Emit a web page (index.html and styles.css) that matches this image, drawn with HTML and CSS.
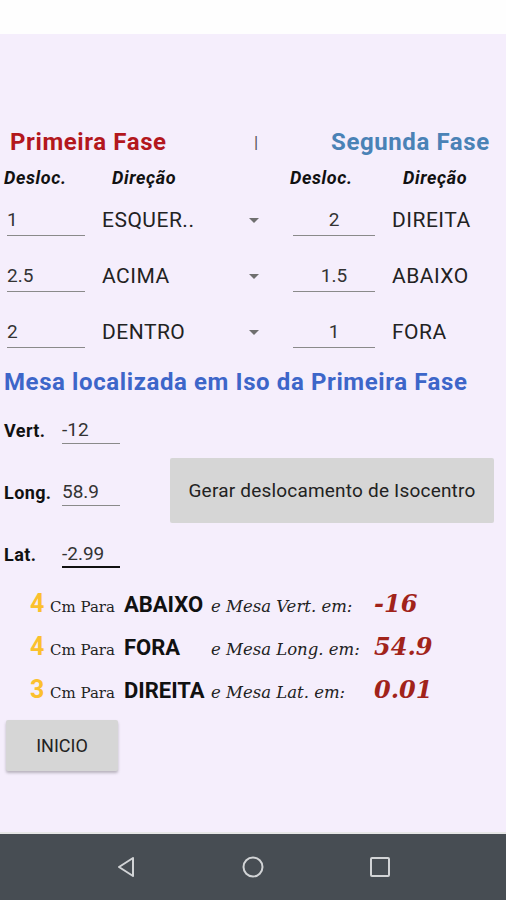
FILE: index.html
```html
<!DOCTYPE html>
<html>
<head>
    <title>Deslocamento de Isocentro</title>
    <link rel="stylesheet" href="styles.css">
</head>
<body>
    <div class="status-bar"></div>

    <div class="screen">
        <div class="phase-header">
            <span class="phase-first">Primeira Fase</span>
            <span class="phase-sep">|</span>
            <span class="phase-second">Segunda Fase</span>
        </div>

        <div class="col-header">
            <span class="h-desloc">Desloc.</span>
            <span class="h-direcao">Direção</span>
            <span class="h-desloc2">Desloc.</span>
            <span class="h-direcao2">Direção</span>
        </div>

        <div class="shift-row">
            <div class="field left-num">1</div>
            <div class="spinner"><span>ESQUER..</span><span class="arrow"></span></div>
            <div class="field right-num">2</div>
            <div class="dir-text">DIREITA</div>
        </div>
        <div class="shift-row">
            <div class="field left-num">2.5</div>
            <div class="spinner"><span>ACIMA</span><span class="arrow"></span></div>
            <div class="field right-num">1.5</div>
            <div class="dir-text">ABAIXO</div>
        </div>
        <div class="shift-row">
            <div class="field left-num">2</div>
            <div class="spinner"><span>DENTRO</span><span class="arrow"></span></div>
            <div class="field right-num">1</div>
            <div class="dir-text">FORA</div>
        </div>

        <h2 class="mesa-title">Mesa localizada em Iso da Primeira Fase</h2>

        <div class="mesa-area">
            <div class="mesa-fields">
                <div class="mesa-row">
                    <span class="mesa-label">Vert.</span>
                    <div class="field mesa-input">-12</div>
                </div>
                <div class="mesa-row">
                    <span class="mesa-label">Long.</span>
                    <div class="field mesa-input">58.9</div>
                </div>
                <div class="mesa-row last">
                    <span class="mesa-label">Lat.</span>
                    <div class="field mesa-input focused">-2.99</div>
                </div>
            </div>
            <button class="gray-button gerar">Gerar deslocamento de Isocentro</button>
        </div>

        <div class="results">
            <div class="result-row">
                <span class="r-num">4</span>
                <span class="r-cm">Cm Para</span>
                <span class="r-dir">ABAIXO</span>
                <span class="r-mesa">e Mesa Vert. em:</span>
                <span class="r-val">-16</span>
            </div>
            <div class="result-row">
                <span class="r-num">4</span>
                <span class="r-cm">Cm Para</span>
                <span class="r-dir">FORA</span>
                <span class="r-mesa">e Mesa Long. em:</span>
                <span class="r-val">54.9</span>
            </div>
            <div class="result-row">
                <span class="r-num">3</span>
                <span class="r-cm">Cm Para</span>
                <span class="r-dir">DIREITA</span>
                <span class="r-mesa">e Mesa Lat. em:</span>
                <span class="r-val">0.01</span>
            </div>
        </div>

        <button class="gray-button inicio">INICIO</button>
    </div>

    <div class="nav-bar">
        <svg width="24" height="24" viewBox="0 0 24 24"><path d="M19 3 L5 12 L19 21 Z" fill="none" stroke="#d2d4d6" stroke-width="2" stroke-linejoin="round"/></svg>
        <svg width="24" height="24" viewBox="0 0 24 24"><circle cx="12" cy="12" r="9.5" fill="none" stroke="#d2d4d6" stroke-width="2"/></svg>
        <svg width="24" height="24" viewBox="0 0 24 24"><rect x="3" y="3" width="18" height="18" rx="1" fill="none" stroke="#d2d4d6" stroke-width="2"/></svg>
    </div>
</body>
</html>
```

FILE: styles.css
```css
body {
    margin: 0;
    font-family: Roboto, "Liberation Sans", sans-serif;
    color: #222;
    background: #fff;
}

.status-bar {
    height: 34px;
    background: #fefefe;
}

.screen {
    height: 798px;
    background: #f5eefc;
    overflow: hidden;
}

/* phase header */
.phase-header {
    display: flex;
    align-items: center;
    height: 30px;
    margin-top: 93px;
    font-size: 24px;
    font-weight: bold;
    letter-spacing: 0.6px;
}

.phase-first {
    margin-left: 10px;
    width: 244px;
    color: #b3171d;
}

.phase-sep {
    width: 77px;
    font-size: 17px;
    font-weight: 400;
    color: #555;
}

.phase-second {
    color: #4a82b6;
}

.col-header {
    display: flex;
    align-items: center;
    height: 24px;
    margin: 8px 0 3px;
    font-size: 18px;
    font-weight: bold;
    font-style: italic;
    letter-spacing: 0.6px;
    color: #111;
}

.h-desloc { margin-left: 4px; width: 108px; }
.h-direcao { width: 178px; }
.h-desloc2 { width: 113px; }

/* shift rows */
.shift-row {
    display: flex;
    align-items: flex-start;
    height: 56px;
}

.field {
    box-sizing: border-box;
    height: 32px;
    margin-top: 12px;
    padding-top: 4px;
    font-size: 19px;
    color: #333;
    border-bottom: 1px solid #8a8a8a;
}

.left-num {
    margin-left: 7px;
    width: 78px;
}

.right-num {
    margin-left: 26px;
    width: 82px;
    text-align: center;
}

.spinner {
    display: flex;
    justify-content: space-between;
    align-items: center;
    margin-left: 17px;
    margin-top: 12px;
    width: 165px;
    height: 32px;
    font-size: 21px;
    letter-spacing: 0.5px;
    color: #222;
}

.arrow {
    width: 0;
    height: 0;
    margin-right: 8px;
    border-left: 5px solid transparent;
    border-right: 5px solid transparent;
    border-top: 5px solid #6f6f6f;
}

.dir-text {
    margin-left: 17px;
    margin-top: 12px;
    height: 32px;
    line-height: 32px;
    font-size: 21px;
    letter-spacing: 0.5px;
    color: #222;
}

/* mesa */
.mesa-title {
    margin: 0;
    padding-left: 4px;
    height: 44px;
    line-height: 44px;
    font-size: 24px;
    font-weight: bold;
    letter-spacing: 0.6px;
    color: #3d66c9;
}

.mesa-area {
    display: flex;
    align-items: flex-start;
}

.mesa-fields {
    width: 166px;
    padding-left: 4px;
}

.mesa-row {
    display: flex;
    align-items: flex-start;
    height: 62px;
}

.mesa-row.last {
    height: 50px;
}

.mesa-label {
    width: 58px;
    margin-top: 16px;
    font-size: 18px;
    font-weight: bold;
    letter-spacing: 0.4px;
    color: #111;
}

.mesa-input {
    width: 58px;
    height: 28px;
    padding-top: 2px;
    font-size: 19px;
}

.mesa-input.focused {
    border-bottom: 2px solid #111;
}

.gray-button {
    font-family: Roboto, "Liberation Sans", sans-serif;
    background: #d6d6d6;
    border: none;
    border-radius: 2px;
    color: #222;
}

.gerar {
    margin-top: 54px;
    width: 324px;
    height: 65px;
    font-size: 19px;
    letter-spacing: 0.2px;
}

/* results */
.results {
    margin-top: 4px;
}

.result-row {
    display: flex;
    align-items: baseline;
    height: 43px;
    line-height: 43px;
}

.r-num {
    margin-left: 30px;
    width: 20px;
    font-size: 25px;
    font-weight: bold;
    color: #fbc02d;
}

.r-cm {
    width: 74px;
    font-family: "DejaVu Serif", serif;
    font-size: 15px;
    color: #222;
}

.r-dir {
    width: 87px;
    font-size: 22px;
    font-weight: bold;
    color: #111;
}

.r-mesa {
    width: 163px;
    font-family: "DejaVu Serif", serif;
    font-style: italic;
    font-size: 16.5px;
    color: #222;
}

.r-val {
    font-family: "DejaVu Serif", serif;
    font-style: italic;
    font-weight: bold;
    font-size: 24px;
    color: #a1231a;
}

.inicio {
    display: block;
    margin: 9px 0 0 6px;
    width: 112px;
    height: 51px;
    font-size: 18px;
    box-shadow: 0 2px 3px rgba(0, 0, 0, 0.25);
}

/* navigation */
.nav-bar {
    display: flex;
    justify-content: center;
    align-items: center;
    gap: 103px;
    height: 66px;
    background: #474d53;
    border-top: 2px solid #e6e6e6;
}
```
